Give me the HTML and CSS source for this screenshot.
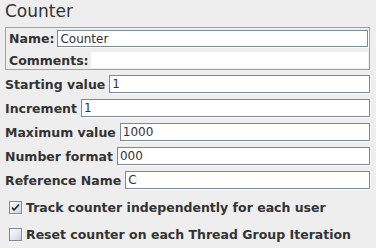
FILE: index.html
```html
<!DOCTYPE html>
<html>
<head>
	<meta charset="UTF-8">
	<title>Counter</title>
	<link rel="stylesheet" href="styles.css">
</head>
<body>
	<div class="title">Counter</div>
	<div class="name-panel">
		<div class="name-row">
			<label for="name">Name:</label>
			<input type="text" id="name" class="field" value="Counter">
		</div>
		<div class="comments-row">
			<label for="comments">Comments:</label>
			<div class="comments" id="comments"></div>
		</div>
	</div>
	<div class="row">
		<label for="start">Starting value</label>
		<input type="text" id="start" class="field" value="1">
	</div>
	<div class="row">
		<label for="incr">Increment</label>
		<input type="text" id="incr" class="field" value="1">
	</div>
	<div class="row">
		<label for="max">Maximum value</label>
		<input type="text" id="max" class="field" value="1000">
	</div>
	<div class="row">
		<label for="format">Number format</label>
		<input type="text" id="format" class="field" value="000">
	</div>
	<div class="row">
		<label for="ref">Reference Name</label>
		<input type="text" id="ref" class="field" value="C">
	</div>
	<div class="checks">
		<div class="check">
			<span class="box">
				<svg width="13" height="13" viewBox="0 0 13 13">
					<path d="M3 6.5 L5 9 L10 3.5" fill="none" stroke="#222" stroke-width="1.6"/>
				</svg>
			</span>
			<span>Track counter independently for each user</span>
		</div>
		<div class="check">
			<span class="box"></span>
			<span>Reset counter on each Thread Group Iteration</span>
		</div>
	</div>
</body>
</html>
```

FILE: styles.css
```css
body {
	margin: 0;
	background-color: #eeeeee;
	font-family: "DejaVu Sans", sans-serif;
	color: #333333;
	font-size: 12px;
}
.title {
	font-size: 17px;
	line-height: 20px;
	padding: 1px 0 0 5px;
	margin-bottom: 6px;
}
.name-panel {
	margin: 0 6px 0 5px;
	border: 1px solid #a3a3a3;
	padding: 2px 1px 1px 2px;
	box-sizing: border-box;
	height: 43px;
}
label {
	font-weight: bold;
	font-size: 12.5px;
	white-space: nowrap;
}
.name-row {
	display: flex;
	align-items: center;
	gap: 3px;
	height: 17px;
	padding-left: 1px;
}
.comments-row {
	display: flex;
	align-items: center;
	gap: 2px;
	height: 16px;
	margin-top: 5px;
	padding-left: 1px;
}
.comments {
	flex: 1;
	height: 16px;
	background: #ffffff;
}
.field {
	flex: 1;
	min-width: 0;
	height: 18px;
	box-sizing: border-box;
	border: 1px solid #7a8a99;
	box-shadow: 1px 1px 0 #ffffff;
	background: #ffffff;
	padding: 0 2px;
	margin: 0;
	font-family: "DejaVu Sans", sans-serif;
	font-size: 12px;
	color: #333333;
	outline: none;
}
.name-row .field {
	height: 17px;
}
.row {
	display: flex;
	align-items: center;
	gap: 4px;
	height: 24px;
	padding: 0 6px 0 5px;
}
.name-panel + .row {
	margin-top: 2px;
}
.checks {
	margin-top: 2px;
}
.check {
	display: flex;
	align-items: center;
	gap: 4px;
	height: 27px;
	padding-left: 9px;
	font-weight: bold;
	font-size: 12.5px;
	white-space: nowrap;
}
.box {
	width: 13px;
	height: 13px;
	box-sizing: border-box;
	border: 1px solid #7a8a99;
	box-shadow: 1px 1px 0 #ffffff;
	background: linear-gradient(135deg, #ffffff, #c8d6e4);
	display: flex;
}
.box svg {
	margin: -1px;
}
```
